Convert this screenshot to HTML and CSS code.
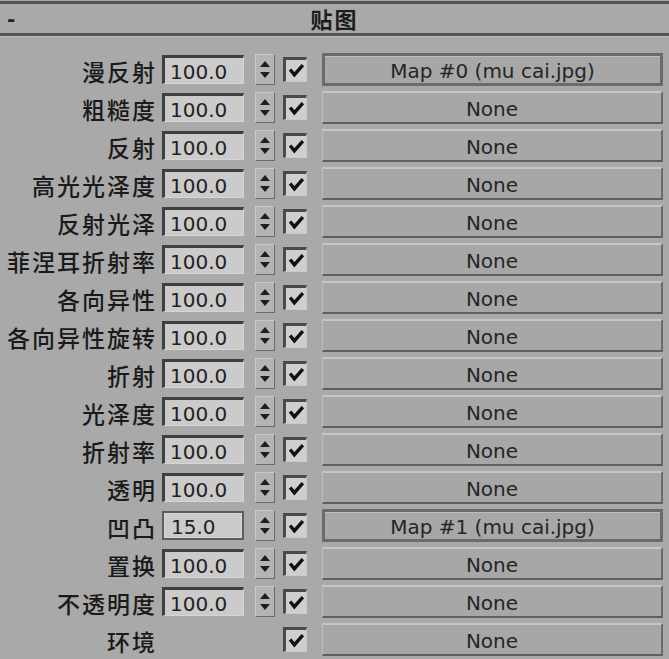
FILE: index.html
```html
<!DOCTYPE html>
<html lang="zh">
<head>
    <meta charset="UTF-8">
    <meta name="viewport" content="width=device-width, initial-scale=1.0">
    <title>贴图</title>
    <link rel="stylesheet" href="styles.css">
</head>
<body>
    <div class="panel">
        <div class="rollout-head">
            <span class="collapse">-</span>
            <span class="rollout-title">贴图</span>
            <span></span>
        </div>

        <div class="map-list">
            <div class="map-row">
                <span class="map-label">漫反射</span>
                <span class="amount">100.0</span>
                <span class="spinner"><i class="up"></i><i class="down"></i></span>
                <span class="check"><svg viewBox="0 0 16 14"><path d="M2 6 L6 11 L14 2" /></svg></span>
                <button class="slot active">Map #0 (mu cai.jpg)</button>
            </div>
            <div class="map-row">
                <span class="map-label">粗糙度</span>
                <span class="amount">100.0</span>
                <span class="spinner"><i class="up"></i><i class="down"></i></span>
                <span class="check"><svg viewBox="0 0 16 14"><path d="M2 6 L6 11 L14 2" /></svg></span>
                <button class="slot">None</button>
            </div>
            <div class="map-row">
                <span class="map-label">反射</span>
                <span class="amount">100.0</span>
                <span class="spinner"><i class="up"></i><i class="down"></i></span>
                <span class="check"><svg viewBox="0 0 16 14"><path d="M2 6 L6 11 L14 2" /></svg></span>
                <button class="slot">None</button>
            </div>
            <div class="map-row">
                <span class="map-label">高光光泽度</span>
                <span class="amount">100.0</span>
                <span class="spinner"><i class="up"></i><i class="down"></i></span>
                <span class="check"><svg viewBox="0 0 16 14"><path d="M2 6 L6 11 L14 2" /></svg></span>
                <button class="slot">None</button>
            </div>
            <div class="map-row">
                <span class="map-label">反射光泽</span>
                <span class="amount">100.0</span>
                <span class="spinner"><i class="up"></i><i class="down"></i></span>
                <span class="check"><svg viewBox="0 0 16 14"><path d="M2 6 L6 11 L14 2" /></svg></span>
                <button class="slot">None</button>
            </div>
            <div class="map-row">
                <span class="map-label">菲涅耳折射率</span>
                <span class="amount">100.0</span>
                <span class="spinner"><i class="up"></i><i class="down"></i></span>
                <span class="check"><svg viewBox="0 0 16 14"><path d="M2 6 L6 11 L14 2" /></svg></span>
                <button class="slot">None</button>
            </div>
            <div class="map-row">
                <span class="map-label">各向异性</span>
                <span class="amount">100.0</span>
                <span class="spinner"><i class="up"></i><i class="down"></i></span>
                <span class="check"><svg viewBox="0 0 16 14"><path d="M2 6 L6 11 L14 2" /></svg></span>
                <button class="slot">None</button>
            </div>
            <div class="map-row">
                <span class="map-label">各向异性旋转</span>
                <span class="amount">100.0</span>
                <span class="spinner"><i class="up"></i><i class="down"></i></span>
                <span class="check"><svg viewBox="0 0 16 14"><path d="M2 6 L6 11 L14 2" /></svg></span>
                <button class="slot">None</button>
            </div>
            <div class="map-row">
                <span class="map-label">折射</span>
                <span class="amount">100.0</span>
                <span class="spinner"><i class="up"></i><i class="down"></i></span>
                <span class="check"><svg viewBox="0 0 16 14"><path d="M2 6 L6 11 L14 2" /></svg></span>
                <button class="slot">None</button>
            </div>
            <div class="map-row">
                <span class="map-label">光泽度</span>
                <span class="amount">100.0</span>
                <span class="spinner"><i class="up"></i><i class="down"></i></span>
                <span class="check"><svg viewBox="0 0 16 14"><path d="M2 6 L6 11 L14 2" /></svg></span>
                <button class="slot">None</button>
            </div>
            <div class="map-row">
                <span class="map-label">折射率</span>
                <span class="amount">100.0</span>
                <span class="spinner"><i class="up"></i><i class="down"></i></span>
                <span class="check"><svg viewBox="0 0 16 14"><path d="M2 6 L6 11 L14 2" /></svg></span>
                <button class="slot">None</button>
            </div>
            <div class="map-row">
                <span class="map-label">透明</span>
                <span class="amount">100.0</span>
                <span class="spinner"><i class="up"></i><i class="down"></i></span>
                <span class="check"><svg viewBox="0 0 16 14"><path d="M2 6 L6 11 L14 2" /></svg></span>
                <button class="slot">None</button>
            </div>
            <div class="map-row">
                <span class="map-label">凹凸</span>
                <span class="amount focused">15.0</span>
                <span class="spinner"><i class="up"></i><i class="down"></i></span>
                <span class="check"><svg viewBox="0 0 16 14"><path d="M2 6 L6 11 L14 2" /></svg></span>
                <button class="slot active">Map #1 (mu cai.jpg)</button>
            </div>
            <div class="map-row">
                <span class="map-label">置换</span>
                <span class="amount">100.0</span>
                <span class="spinner"><i class="up"></i><i class="down"></i></span>
                <span class="check"><svg viewBox="0 0 16 14"><path d="M2 6 L6 11 L14 2" /></svg></span>
                <button class="slot">None</button>
            </div>
            <div class="map-row">
                <span class="map-label">不透明度</span>
                <span class="amount">100.0</span>
                <span class="spinner"><i class="up"></i><i class="down"></i></span>
                <span class="check"><svg viewBox="0 0 16 14"><path d="M2 6 L6 11 L14 2" /></svg></span>
                <button class="slot">None</button>
            </div>
            <div class="map-row">
                <span class="map-label">环境</span>
                <span class="amount blank"></span>
                <span class="spinner blank"></span>
                <span class="check"><svg viewBox="0 0 16 14"><path d="M2 6 L6 11 L14 2" /></svg></span>
                <button class="slot">None</button>
            </div>
        </div>
    </div>
</body>
</html>
```

FILE: styles.css
```css
body {
    margin: 0;
    background-color: #a9a9a9;
    font-family: "DejaVu Sans", Verdana, sans-serif;
    color: #222;
}
.panel {
    width: 669px;
    min-height: 659px;
    background-color: #a9a9a9;
}
.rollout-head {
    margin-top: 1px;
    height: 29px;
    border-top: 3px solid #535353;
    border-bottom: 3px solid #535353;
    box-shadow: 0 1px 0 #bdbdbd;
    display: grid;
    grid-template-columns: 1fr auto 1fr;
    align-items: center;
}
.collapse {
    padding-left: 7px;
    font-size: 20px;
    font-weight: bold;
    line-height: 1;
}
.rollout-title {
    font-family: "Noto Sans CJK SC", sans-serif;
    font-size: 22px;
    font-weight: bold;
    letter-spacing: 2px;
    line-height: 1;
    color: #1c1c1c;
    margin-bottom: 2px;
}
.map-list {
    padding-top: 14px;
}
.map-row {
    height: 38px;
    display: flex;
    align-items: center;
}
.map-label {
    width: 157px;
    text-align: right;
    font-family: "Noto Sans CJK SC", sans-serif;
    font-size: 23px;
    font-weight: 500;
    letter-spacing: 2px;
    margin-right: -2px;
    color: #1a1a1a;
    padding-top: 4px;
    white-space: nowrap;
}
.amount {
    margin-left: 7px;
    width: 73px;
    height: 25px;
    line-height: 28px;
    padding-left: 5px;
    background-color: #cbcbcb;
    border-top: 3px solid #3f3f3f;
    border-left: 3px solid #3f3f3f;
    border-right: 1px solid #d6d6d6;
    border-bottom: 1px solid #d6d6d6;
    font-size: 20px;
    box-sizing: content-box;
}
.amount.focused {
    border: 2px solid #5c5c5c;
    box-shadow: inset 0 0 0 1px #d8d8d8;
    height: 25px;
    width: 71px;
    padding-left: 7px;
    line-height: 28px;
}
.amount.blank, .spinner.blank {
    visibility: hidden;
}
.spinner {
    margin-left: 11px;
    width: 18px;
    height: 29px;
    background-color: #b4b4b4;
    border-top: 1px solid #c8c8c8;
    border-left: 1px solid #c8c8c8;
    border-right: 1px solid #6a6a6a;
    border-bottom: 1px solid #6a6a6a;
    display: flex;
    flex-direction: column;
    align-items: center;
    justify-content: center;
    gap: 5px;
}
.spinner i {
    width: 0;
    height: 0;
    border-left: 5px solid transparent;
    border-right: 5px solid transparent;
}
.spinner .up {
    border-bottom: 6px solid #1e1e1e;
}
.spinner .down {
    border-top: 6px solid #1e1e1e;
}
.check {
    margin-left: 8px;
    width: 20px;
    height: 21px;
    background-color: #cfcfcf;
    border-top: 3px solid #4a4a4a;
    border-left: 3px solid #4a4a4a;
    border-right: 1px solid #c9c9c9;
    border-bottom: 1px solid #c9c9c9;
    display: flex;
    align-items: center;
    justify-content: center;
}
.check svg {
    width: 17px;
    height: 15px;
}
.check path {
    fill: none;
    stroke: #111;
    stroke-width: 3.2;
}
.slot {
    margin-left: 15px;
    width: 341px;
    height: 33px;
    padding: 3px 0 0;
    background-color: #a7a7a7;
    border-top: 2px solid #c6c6c6;
    border-left: 1px solid #bdbdbd;
    border-right: 2px solid #6a6a6a;
    border-bottom: 2px solid #5f5f5f;
    font-family: "DejaVu Sans", Verdana, sans-serif;
    font-size: 20px;
    color: #252525;
}
.slot.active {
    border: 3px solid #6b6b6b;
    box-shadow: inset 0 1px 0 #bfbfbf;
}
```
